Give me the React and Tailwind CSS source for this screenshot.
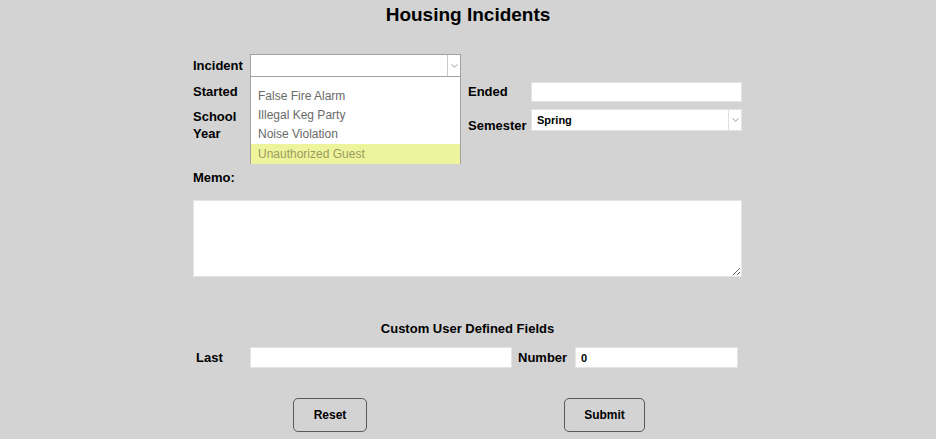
import { useState } from "react";

function Chevron() {
  return (
    <svg width="7" height="4" viewBox="0 0 7 4" className="block">
      <path d="M0.5 0.5 L3.5 3.2 L6.5 0.5" fill="none" stroke="#9a9a9a" strokeWidth="1" />
    </svg>
  );
}

const incidents = ["False Fire Alarm", "Illegal Keg Party", "Noise Violation", "Unauthorized Guest"];

export default function App() {
  const [hover] = useState(3);

  return (
    <div className="min-h-[439px] w-full bg-[#d3d3d3] text-black font-['Liberation_Sans',Arial,sans-serif]">
      <h1 className="pt-[4px] text-center text-[19px] leading-[22px] font-bold">Housing Incidents</h1>

      <div className="mx-auto w-[550px] mt-[28px]">
        {/* Top form grid */}
        <div className="grid grid-cols-[57px_211px_7px_63px_211px]">
          {/* Row 1 */}
          <label className="text-[13px] font-bold self-center pt-[1px]">Incident</label>
          <div className="relative">
            <div className="flex h-[23px] border border-[#a2a2a2] bg-white">
              <div className="flex-1" />
              <div className="w-[13px] border-l border-[#c8c8c8] flex items-center justify-center">
                <Chevron />
              </div>
            </div>
            {/* Open dropdown list */}
            <ul className="absolute left-0 top-[23px] z-10 w-[211px] h-[87px] border border-t-0 border-[#a2a2a2] bg-white pt-[10px] text-[12px] text-[#696969]">
              {incidents.map((item, i) => (
                <li
                  key={item}
                  className={
                    i === hover
                      ? "h-[20px] leading-[20px] pl-[7px] bg-[#eef49c] text-[#9b9b5e]"
                      : "h-[19px] leading-[19px] pl-[7px]"
                  }
                >
                  {item}
                </li>
              ))}
            </ul>
          </div>
          <div />
          <div />
          <div />

          {/* Row 2 */}
          <label className="text-[13px] font-bold self-center mt-[5px]">Started</label>
          <input className="h-[20px] mt-[5px] bg-white border border-[#e4e4e4] outline-none" />
          <div />
          <label className="text-[13px] font-bold self-center mt-[5px]">Ended</label>
          <input className="h-[20px] mt-[5px] bg-white border border-[#e4e4e4] outline-none" />

          {/* Row 3 */}
          <label className="text-[13px] font-bold leading-[17px] mt-[6px]">
            School
            <br />
            Year
          </label>
          <div />
          <div />
          <label className="text-[13px] font-bold self-center mt-[8px]">Semester</label>
          <div className="mt-[7px] flex h-[22px] bg-white border border-[#e4e4e4] self-start">
            <span className="flex-1 pl-[5px] text-[11px] font-bold leading-[20px]">Spring</span>
            <div className="w-[13px] border-l border-[#e0e0e0] flex items-center justify-center">
              <Chevron />
            </div>
          </div>
        </div>

        {/* Memo */}
        <div className="mt-[27px] text-[13px] font-bold leading-[17px]">Memo:</div>
        <textarea className="mt-[14px] block w-[549px] h-[77px] bg-white border border-[#e4e4e4] outline-none" />

        {/* Custom fields */}
        <div className="mt-[44px] w-[549px] text-center text-[13px] font-bold leading-[16px]">Custom User Defined Fields</div>
        <div className="mt-[10px] flex items-center">
          <label className="w-[57px] pl-[3px] text-[13px] font-bold">Last</label>
          <input className="w-[262px] h-[21px] bg-white border border-[#e4e4e4] outline-none" />
          <label className="w-[63px] pl-[6px] text-[13px] font-bold">Number</label>
          <input
            defaultValue="0"
            className="w-[163px] h-[21px] bg-white border border-[#e4e4e4] pl-[5px] text-[11px] font-bold outline-none"
          />
        </div>

        {/* Buttons */}
        <div className="mt-[30px] flex">
          <button className="ml-[100px] w-[74px] h-[34px] rounded-[5px] border border-[#5a5a5a] text-[12px] font-bold">
            Reset
          </button>
          <button className="ml-[197px] w-[81px] h-[34px] rounded-[5px] border border-[#5a5a5a] text-[12px] font-bold">
            Submit
          </button>
        </div>
      </div>
    </div>
  );
}
